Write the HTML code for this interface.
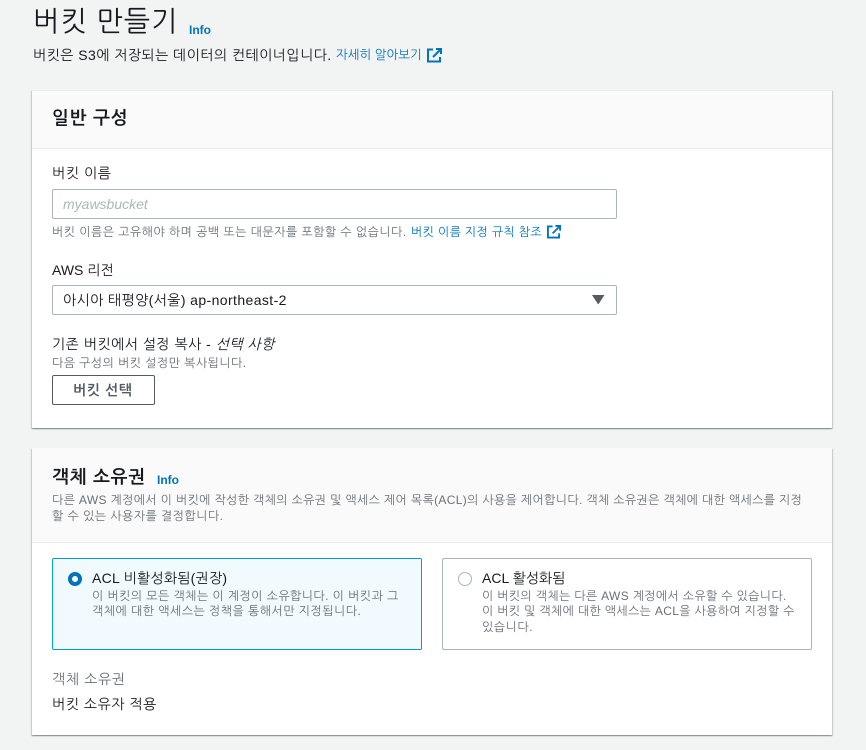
<!DOCTYPE html>
<html lang="ko"><head><meta charset="utf-8"><style>
html,body{margin:0;padding:0;width:866px;height:750px;overflow:hidden;background:#f2f3f3}
body{position:relative;font-family:"Liberation Sans","NanumGothic","Noto Sans CJK KR",sans-serif;color:#16191f;font-size:14px}
.t{position:absolute;white-space:nowrap;line-height:20px}
.card{position:absolute;left:32px;width:800px;background:#fff;box-shadow:0 1px 1px 0 rgba(0,28,36,.3),1px 1px 1px 0 rgba(0,28,36,.15),-1px 1px 1px 0 rgba(0,28,36,.15);border-top:1px solid #eaeded;box-sizing:border-box}
.hd{position:absolute;left:32px;width:800px;background:#fafafa;border-bottom:1px solid #eaeded;box-sizing:border-box}
.box{position:absolute;box-sizing:border-box;border:1px solid #aab7b8;border-radius:2px;background:#fff}
.g{color:#687078;font-size:12px}
.b{color:#0073bb}
.info{color:#0073bb;font-weight:700;font-size:12px}
svg{position:absolute}
</style></head><body>
<div class="t" style="left:33px;top:4px;font-size:28px;line-height:36px;letter-spacing:1px">버킷 만들기</div>
<div class="t info" style="left:189px;top:20px">Info</div>
<div class="t" style="left:33px;top:45px;font-size:14px;letter-spacing:.46px">버킷은 S3에 저장되는 데이터의 컨테이너입니다.</div>
<div class="t b" style="left:336px;top:45px;font-size:12.5px">자세히 알아보기</div>
<svg style="left:427px;top:48px" width="15" height="15" viewBox="0 0 15 15" fill="none" stroke="#0073bb" stroke-width="2"><path d="M6 1.500H1v12h12V9"/><path d="M9 1h5v5M13.500 1.500L6 9"/></svg>

<div class="card" style="top:90px;height:338px"></div>
<div class="hd" style="top:90px;height:59px;border-top:1px solid #eaeded"></div>
<div class="t" style="left:52px;top:107px;font-size:18px;line-height:22px;font-weight:700;letter-spacing:.7px">일반 구성</div>
<div class="t" style="left:52px;top:163px;letter-spacing:.6px">버킷 이름</div>
<div class="box" style="left:52px;top:189px;width:565px;height:30px"></div>
<div class="t" style="left:63px;top:194px;font-style:italic;color:#aab7b8;font-size:14px">myawsbucket</div>
<div class="t g" style="left:52px;top:222px;letter-spacing:.45px">버킷 이름은 고유해야 하며 공백 또는 대문자를 포함할 수 없습니다.</div>
<div class="t b" style="left:411px;top:222px;font-size:12px;letter-spacing:.35px">버킷 이름 지정 규칙 참조</div>
<svg style="left:547px;top:225px" width="14" height="14" viewBox="0 0 15 15" fill="none" stroke="#0073bb" stroke-width="2"><path d="M6 1.500H1v12h12V9"/><path d="M9 1h5v5M13.500 1.500L6 9"/></svg>
<div class="t" style="left:52px;top:260px">AWS 리전</div>
<div class="box" style="left:52px;top:285px;width:565px;height:30px"></div>
<div class="t" style="left:63px;top:290px;letter-spacing:.4px">아시아 태평양(서울) ap-northeast-2</div>
<svg style="left:592px;top:295px" width="13" height="10" viewBox="0 0 13 10"><path d="M0 0h12.500L6.250 9.500z" fill="#545b64"/></svg>
<div class="t" style="left:52px;top:334px;letter-spacing:.5px">기존 버킷에서 설정 복사 - <i>선택 사항</i></div>
<div class="t g" style="left:52px;top:353px;letter-spacing:.43px">다음 구성의 버킷 설정만 복사됩니다.</div>
<div class="box" style="left:52px;top:375px;width:103px;height:30px;border-color:#545b64"></div>
<div class="t" style="left:73px;top:380px;font-weight:700;color:#545b64;letter-spacing:.6px">버킷 선택</div>

<div class="card" style="top:448px;height:287px"></div>
<div class="hd" style="top:448px;height:95px"></div>
<div class="t" style="left:52px;top:466px;font-size:18px;line-height:22px;font-weight:700;letter-spacing:.7px">객체 소유권</div>
<div class="t info" style="left:157px;top:470px">Info</div>
<div class="t g" style="left:52px;top:490px;letter-spacing:.34px">다른 AWS 계정에서 이 버킷에 작성한 객체의 소유권 및 액세스 제어 목록(ACL)의 사용을 제어합니다. 객체 소유권은 객체에 대한 액세스를 지정</div>
<div class="t g" style="left:52px;top:506px;letter-spacing:.45px">할 수 있는 사용자를 결정합니다.</div>

<div class="box" style="left:52px;top:558px;width:370px;height:92px;border-color:#00a1c9;background:#f1faff"></div>
<div style="position:absolute;left:68px;top:572px;width:14px;height:14px;box-sizing:border-box;border-radius:50%;border:4px solid #0073bb;background:#fff"></div>
<div class="t" style="left:92px;top:568px;letter-spacing:.25px">ACL 비활성화됨(권장)</div>
<div class="t g" style="left:92px;top:586px;letter-spacing:.42px">이 버킷의 모든 객체는 이 계정이 소유합니다. 이 버킷과 그</div>
<div class="t g" style="left:92px;top:601px;letter-spacing:.46px">객체에 대한 액세스는 정책을 통해서만 지정됩니다.</div>

<div class="box" style="left:442px;top:558px;width:370px;height:92px"></div>
<div style="position:absolute;left:458px;top:572px;width:14px;height:14px;box-sizing:border-box;border-radius:50%;border:1px solid #aab7b8;background:#fff"></div>
<div class="t" style="left:482px;top:568px">ACL 활성화됨</div>
<div class="t g" style="left:482px;top:586px;letter-spacing:.33px">이 버킷의 객체는 다른 AWS 계정에서 소유할 수 있습니다.</div>
<div class="t g" style="left:482px;top:601px;letter-spacing:.33px">이 버킷 및 객체에 대한 액세스는 ACL을 사용하여 지정할 수</div>
<div class="t g" style="left:482px;top:617px;letter-spacing:.5px">있습니다.</div>

<div class="t" style="left:52px;top:669px;color:#687078;letter-spacing:.7px">객체 소유권</div>
<div class="t" style="left:52px;top:694px;letter-spacing:.55px">버킷 소유자 적용</div>
</body></html>
